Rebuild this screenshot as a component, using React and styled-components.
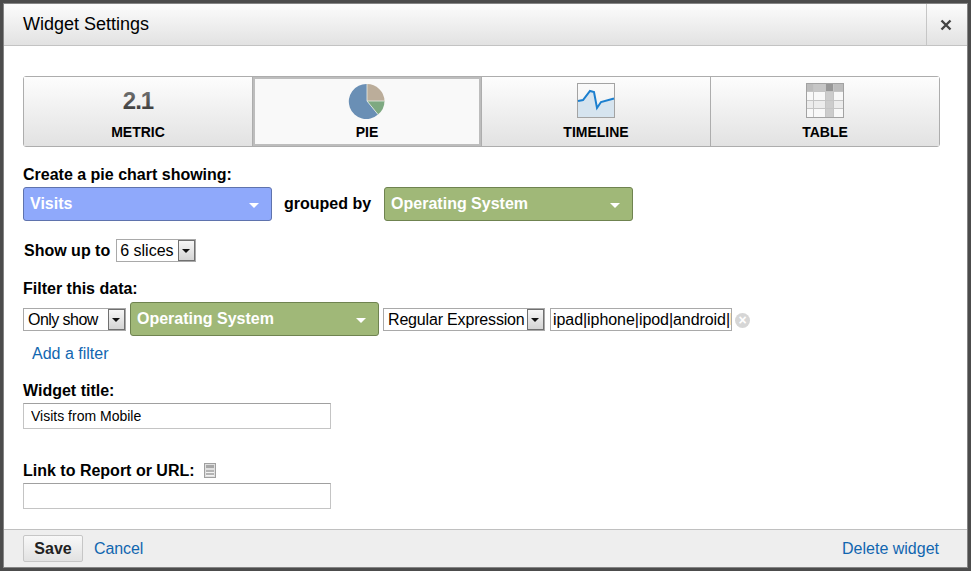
import React from "react";
import styled, { createGlobalStyle } from "styled-components";

const Global = createGlobalStyle`
  html, body { margin: 0; padding: 0; background: #4a4a4a; }
  body { font-family: "Liberation Sans", Arial, sans-serif; color: #000; }
`;

const TABS = [
  { name: "METRIC", icon: <MetricIcon /> },
  { name: "PIE", icon: <PieIcon />, active: true },
  { name: "TIMELINE", icon: <TimelineIcon /> },
  { name: "TABLE", icon: <TableIcon /> },
];

export default function App() {
  return (
    <Frame>
      <Global />
      <Dialog>
        <Header>
          <Title>Widget Settings</Title>
          <CloseBox>
            <svg width="12" height="12" viewBox="0 0 12 12">
              <path d="M1.5 1.5 L10.5 10.5 M10.5 1.5 L1.5 10.5" stroke="#444" strokeWidth="2.4" />
            </svg>
          </CloseBox>
        </Header>
        <Body>
          <Tabs>
            {TABS.map((t) => (
              <Tab key={t.name} $active={t.active}>
                <TabIcon>{t.icon}</TabIcon>
                <TabName>{t.name}</TabName>
              </Tab>
            ))}
          </Tabs>
          <Label $top={19}>Create a pie chart showing:</Label>
          <Row $top={3}>
            <Pill $color="#8fa9fb" $border="#5f73ad">Visits<Caret /></Pill>
            <RowLabel $left={12} $right={13}>grouped by</RowLabel>
            <Pill $color="#a0b878" $border="#6f8350">Operating System<Caret /></Pill>
          </Row>
          <Row $top={18}>
            <RowLabel $left={1} $right={6}>Show up to</RowLabel>
            <Select $width={80} $pad={3}>6 slices<SelectArrow /></Select>
          </Row>
          <Label $top={18}>Filter this data:</Label>
          <Row $top={4}>
            <Select $width={103} $spacing={-0.55}>Only show<SelectArrow /></Select>
            <Pill $color="#a0b878" $border="#6f8350" $left={4}>Operating System<Caret /></Pill>
            <Select $width={162} $left={4} $spacing={-0.17}>Regular Expression<SelectArrow /></Select>
            <FilterInput readOnly value="ipad|iphone|ipod|android|blackberry" />
            <RemoveIcon />
          </Row>
          <FilterLink>Add a filter</FilterLink>
          <Label $top={19}>Widget title:</Label>
          <TextBox readOnly value="Visits from Mobile" />
          <Label $top={33}>
            Link to Report or URL:
            <ReportIcon />
          </Label>
          <TextBox readOnly value="" />
        </Body>
        <Footer>
          <SaveButton>Save</SaveButton>
          <FooterLink>Cancel</FooterLink>
          <DeleteLink>Delete widget</DeleteLink>
        </Footer>
      </Dialog>
    </Frame>
  );
}

function MetricIcon() {
  return (
    <svg width="38" height="38" viewBox="0 0 38 38">
      <defs>
        <linearGradient id="metricFill" x1="0" y1="0" x2="0" y2="1">
          <stop offset="0" stopColor="#7c7c7c" />
          <stop offset="1" stopColor="#333" />
        </linearGradient>
      </defs>
      <text x="19" y="27" textAnchor="middle" fontFamily="Liberation Sans" fontWeight="700" fontSize="24" letterSpacing="-1" fill="url(#metricFill)">2.1</text>
    </svg>
  );
}

function PieIcon() {
  return (
    <svg width="38" height="38" viewBox="0 0 38 38">
      <path d="M19 19 L19 2 A17.5 17.5 0 0 1 36.5 19 Z" fill="#bbad9a" />
      <path d="M19 19 L36.5 19 A17.5 17.5 0 0 1 30 32.5 Z" fill="#7ea981" />
      <path d="M19 19 L30 32.5 A17.5 17.5 0 1 1 19 2 Z" fill="#6a8fb5" />
      <path d="M19 2 L19 19 L36.5 19 M19 19 L30 32.5" stroke="#e8eee6" strokeWidth="0.8" fill="none" />
    </svg>
  );
}

function TimelineIcon() {
  return (
    <svg width="38" height="36" viewBox="0 0 38 36">
      <defs>
        <linearGradient id="timelineBg" x1="0" y1="0" x2="0" y2="1">
          <stop offset="0" stopColor="#fafafa" />
          <stop offset="1" stopColor="#eeeeee" />
        </linearGradient>
      </defs>
      <rect x="0.5" y="1.5" width="37" height="34" fill="url(#timelineBg)" stroke="#a3a3a3" />
      <path d="M1 19 L6 18 L13 9 L17 10 L20 26 L24 20 L37 16.5 L37 35 L1 35 Z" fill="#d6e4ef" />
      <path d="M1 19 L6 18 L13 9 L17 10 L20 26 L24 20 L37 16.5" stroke="#1b7fcf" strokeWidth="2" fill="none" />
    </svg>
  );
}

function TableIcon() {
  const cols = [
    [1, 6],
    [8, 11],
    [20, 7],
    [28, 9],
  ];
  const rows = [
    [1, 7],
    [9, 8],
    [18, 7],
    [26, 8],
  ];
  const fill = (c, r) => {
    if (r === 0) return ["#bcbcbc", "#c6c6c6", "#979797", "#bcbcbc"][c];
    if (c === 2) return "#cccccc";
    if (r === 2) return "#ececec";
    return "#f8f8f8";
  };
  return (
    <svg width="38" height="36" viewBox="0 0 38 36">
      <rect x="0.5" y="1.5" width="37" height="34" fill="#c4c4c4" stroke="#a2a2a2" />
      {rows.map((r, ri) =>
        cols.map((c, ci) => (
          <rect key={ri + "-" + ci} x={c[0]} y={r[0] + 1} width={c[1]} height={r[1]} fill={fill(ci, ri)} />
        ))
      )}
    </svg>
  );
}

const Frame = styled.div`
  box-sizing: border-box;
  width: 971px;
  height: 571px;
  border: 3px solid #4c4c4c;
`;

const Dialog = styled.div`
  box-sizing: border-box;
  height: 100%;
  border: 1px solid #858585;
  display: flex;
  flex-direction: column;
  background: #fff;
  overflow: hidden;
`;

const Header = styled.div`
  flex: none;
  box-sizing: border-box;
  height: 42px;
  display: flex;
  align-items: stretch;
  justify-content: space-between;
  background: linear-gradient(#fcfcfc, #e2e2e2);
  border-bottom: 1px solid #c3c3c3;
`;

const Title = styled.div`
  font-size: 18px;
  line-height: 41px;
  padding-left: 19px;
`;

const CloseBox = styled.div`
  box-sizing: border-box;
  width: 41px;
  padding-right: 3px;
  border-left: 1px solid #c6c6c6;
  display: flex;
  align-items: center;
  justify-content: center;
`;

const Body = styled.div`
  flex: 1;
  padding: 30px 27px 0 19px;
`;

const Tabs = styled.div`
  display: flex;
  height: 71px;
  box-sizing: border-box;
  border: 1px solid #adadad;
  border-radius: 3px;
`;

const Tab = styled.div`
  flex: 1;
  display: flex;
  flex-direction: column;
  align-items: center;
  padding-top: 5px;
  box-sizing: border-box;
  background: ${(p) => (p.$active ? "#f9f9f9" : "linear-gradient(#fdfdfd, #e2e2e2)")};
  box-shadow: ${(p) => (p.$active ? "inset 0 0 0 2px #bdbdbd" : "none")};
  & + & {
    border-left: 1px solid #adadad;
  }
`;

const TabIcon = styled.div`
  height: 38px;
  display: flex;
  align-items: flex-start;
`;

const TabName = styled.div`
  font-size: 14px;
  line-height: 16px;
  font-weight: 700;
  margin-top: 4px;
`;

const Label = styled.div`
  font-size: 16px;
  line-height: 18px;
  font-weight: 700;
  margin-top: ${(p) => p.$top}px;
  display: flex;
  align-items: center;
`;

const Row = styled.div`
  display: flex;
  align-items: center;
  margin-top: ${(p) => p.$top}px;
`;

const RowLabel = styled.div`
  font-size: 16px;
  font-weight: 700;
  margin-left: ${(p) => p.$left}px;
  margin-right: ${(p) => p.$right}px;
`;

const Pill = styled.div`
  position: relative;
  box-sizing: border-box;
  width: 249px;
  height: 34px;
  margin-left: ${(p) => p.$left || 0}px;
  padding: 0 6px;
  background: ${(p) => p.$color};
  border: 1px solid ${(p) => p.$border};
  border-radius: 3px;
  color: #fff;
  font-size: 16px;
  font-weight: 700;
  line-height: 32px;
`;

const Caret = styled.span`
  position: absolute;
  right: 12px;
  top: 15px;
  border: 5px solid transparent;
  border-top-color: #fff;
  border-bottom: 0;
`;

const Select = styled.div`
  position: relative;
  box-sizing: border-box;
  width: ${(p) => p.$width}px;
  height: 23px;
  margin-left: ${(p) => p.$left || 0}px;
  padding-left: ${(p) => p.$pad || 4}px;
  border: 1px solid #a9a9a9;
  font-size: 16px;
  letter-spacing: ${(p) => p.$spacing || 0}px;
  line-height: 21px;
  background: #fff;
  white-space: nowrap;
`;

const SelectArrow = styled.span`
  position: absolute;
  right: 0;
  top: 0;
  bottom: 0;
  width: 17px;
  border: 1px solid #707070;
  box-sizing: border-box;
  background: linear-gradient(#f6f6f6, #d4d4d4);
  &::after {
    content: "";
    position: absolute;
    left: 3px;
    top: 8px;
    border: 4px solid transparent;
    border-top-color: #111;
    border-bottom: 0;
  }
`;

const FilterInput = styled.input`
  box-sizing: border-box;
  width: 182px;
  height: 23px;
  margin: 0 0 0 5px;
  padding: 1px 0 0 2px;
  border: 1px solid #a9a9a9;
  outline: none;
  font-family: inherit;
  font-size: 16px;
  letter-spacing: -0.06px;
  color: #000;
`;

const RemoveIcon = styled.span`
  position: relative;
  width: 15px;
  height: 15px;
  margin: 2px 0 0 3px;
  border-radius: 50%;
  background: #d6d6d6;
  &::after {
    content: "×";
    position: absolute;
    inset: 0;
    color: #fff;
    font-size: 14px;
    font-weight: 700;
    line-height: 15px;
    text-align: center;
  }
`;

const FilterLink = styled.div`
  margin: 9px 0 0 9px;
  font-size: 16px;
  line-height: 18px;
  color: #1166b0;
`;

const TextBox = styled.input`
  display: block;
  box-sizing: border-box;
  width: 308px;
  height: 26px;
  margin: 3px 0 0;
  padding: 0 0 0 7px;
  border: 1px solid #c4c4c4;
  border-top-color: #a0a0a0;
  outline: none;
  font-family: inherit;
  font-size: 14px;
  color: #000;
`;

const ReportIcon = styled.span`
  position: relative;
  box-sizing: border-box;
  width: 12px;
  height: 15px;
  margin: 0 0 2px 9px;
  background: #e0e0e0;
  border: 1px solid #a0a0a0;
  &::before {
    content: "";
    position: absolute;
    left: 1px;
    right: 1px;
    top: 1px;
    height: 3px;
    background: #a8a8a8;
  }
  &::after {
    content: "";
    position: absolute;
    left: 1px;
    right: 1px;
    top: 6px;
    height: 6px;
    background: repeating-linear-gradient(#b4b4b4 0 2px, #f4f4f4 2px 3px);
  }
`;

const Footer = styled.div`
  flex: none;
  box-sizing: border-box;
  height: 38px;
  display: flex;
  align-items: center;
  padding: 0 28px 0 19px;
  background: #eeeeee;
  border-top: 1px solid #c0c0c0;
`;

const SaveButton = styled.div`
  box-sizing: border-box;
  width: 60px;
  height: 27px;
  border: 1px solid #c6c6c6;
  border-radius: 2px;
  background: linear-gradient(#f8f8f8, #e2e2e2);
  font-size: 16px;
  font-weight: 700;
  line-height: 26px;
  text-align: center;
  color: #222;
`;

const FooterLink = styled.div`
  margin-left: 11px;
  font-size: 16px;
  letter-spacing: -0.1px;
  color: #1166b0;
`;

const DeleteLink = styled(FooterLink)`
  margin-left: auto;
  letter-spacing: 0;
`;
